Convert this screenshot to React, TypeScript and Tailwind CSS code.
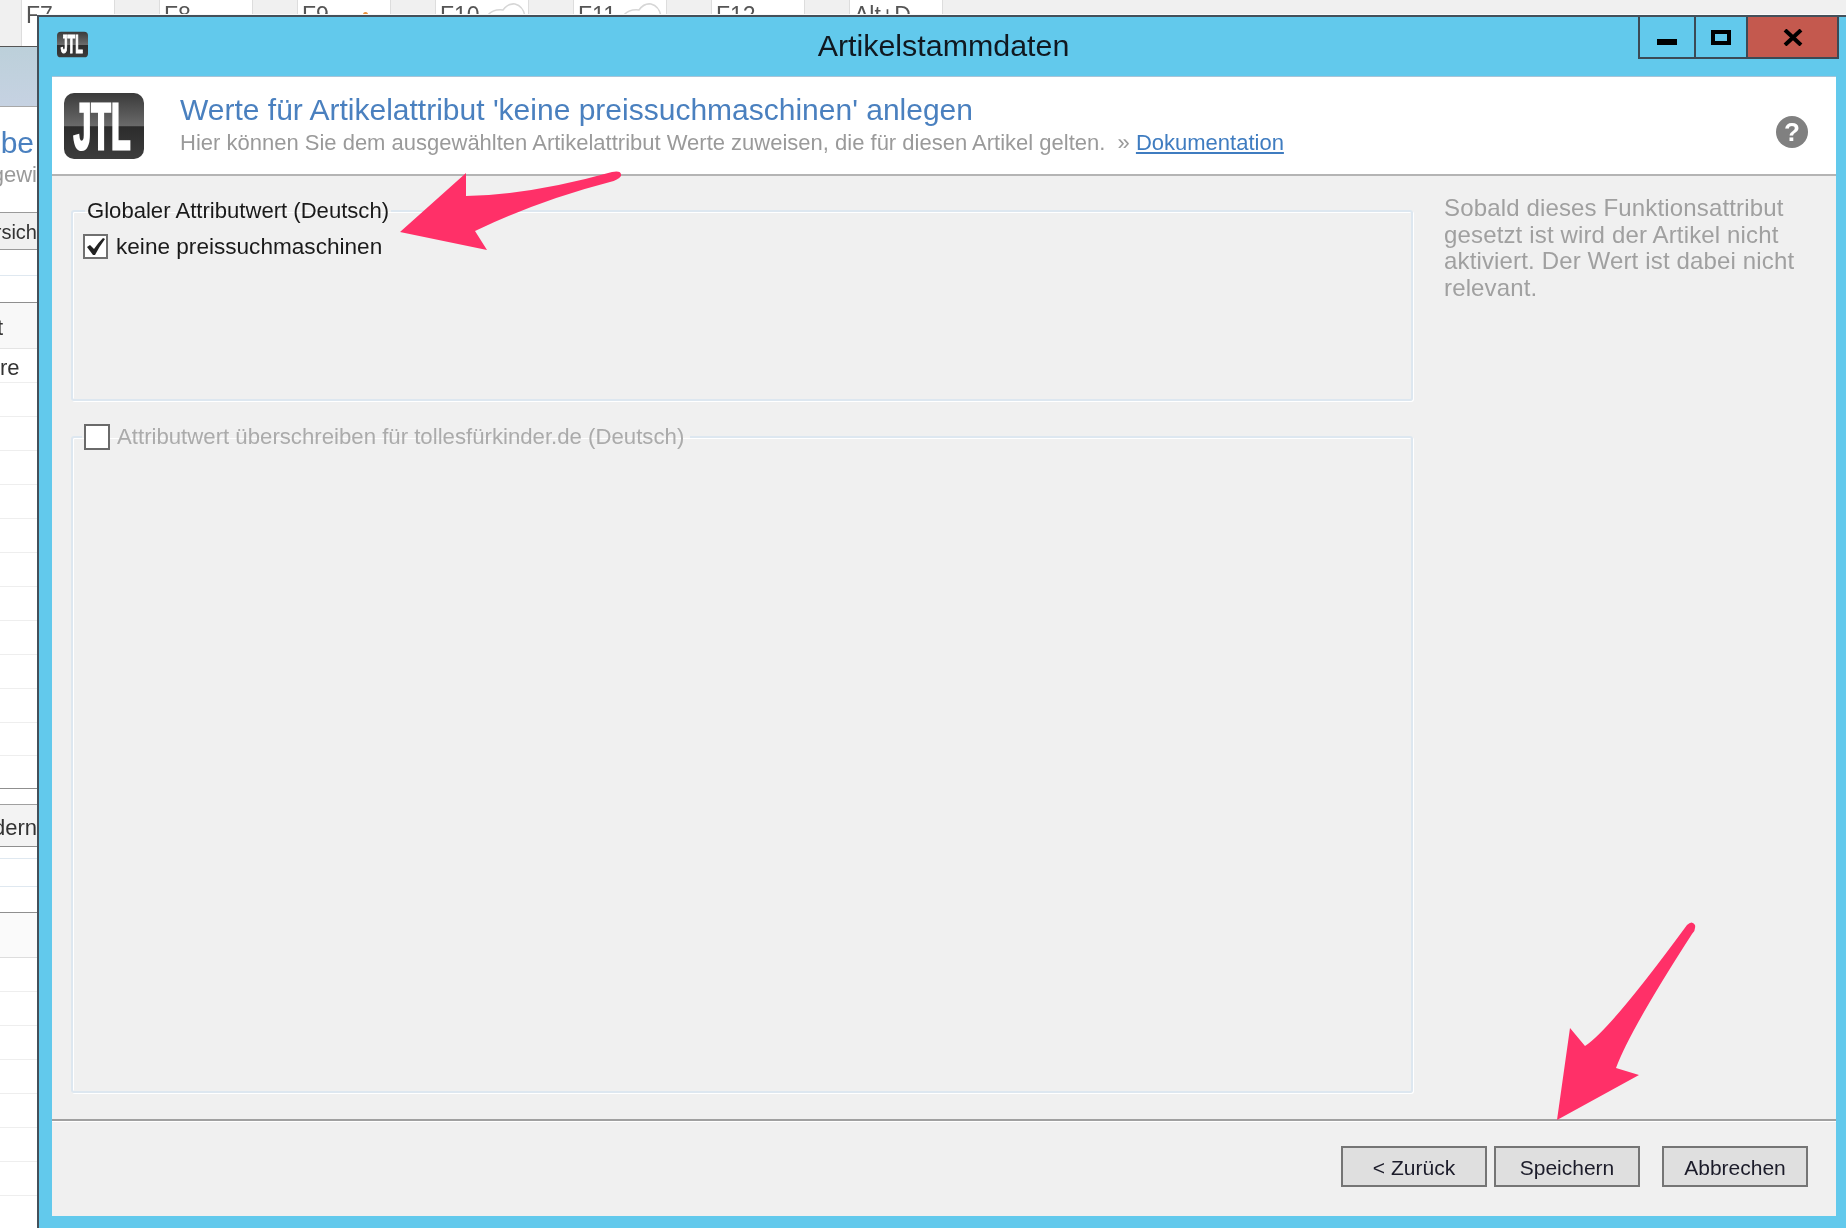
const keys = ["F7", "F8", "F9", "F10", "F11", "F12", "Alt+D"];

// rows of the list behind the dialog, only a 37px strip of it is visible
const rows = [
  { h: "h-[26px]", line: "border-[#dfe8f0]", bg: "bg-white", text: "" },
  { h: "h-[27px]", line: "border-[#8f8f8f]", bg: "bg-white", text: "" },
  { h: "h-[46px]", line: "border-[#e4e4e4]", bg: "bg-[#f8f8f8]", text: "t" },
  { h: "h-[34px]", line: "border-[#eeeeee]", bg: "bg-white", text: "re" },
  { h: "h-[34px]", line: "border-[#eeeeee]", bg: "bg-white", text: "" },
  { h: "h-[34px]", line: "border-[#eeeeee]", bg: "bg-white", text: "" },
  { h: "h-[34px]", line: "border-[#eeeeee]", bg: "bg-white", text: "" },
  { h: "h-[34px]", line: "border-[#eeeeee]", bg: "bg-white", text: "" },
  { h: "h-[34px]", line: "border-[#eeeeee]", bg: "bg-white", text: "" },
  { h: "h-[34px]", line: "border-[#eeeeee]", bg: "bg-white", text: "" },
  { h: "h-[34px]", line: "border-[#eeeeee]", bg: "bg-white", text: "" },
  { h: "h-[34px]", line: "border-[#eeeeee]", bg: "bg-white", text: "" },
  { h: "h-[34px]", line: "border-[#eeeeee]", bg: "bg-white", text: "" },
  { h: "h-[34px]", line: "border-[#eeeeee]", bg: "bg-white", text: "" },
  { h: "h-[33px]", line: "border-[#eeeeee]", bg: "bg-white", text: "" },
  { h: "h-[33px]", line: "border-[#8f8f8f]", bg: "bg-white", text: "" },
  { h: "h-[16px]", line: "border-[#a0a0a0]", bg: "bg-white", text: "" },
  { h: "h-[42px]", line: "border-[#8f8f8f]", bg: "bg-[#f3f3f3]", text: "dern" },
  { h: "h-[12px]", line: "border-[#dfe8f0]", bg: "bg-white", text: "" },
  { h: "h-[28px]", line: "border-[#dfe8f0]", bg: "bg-white", text: "" },
  { h: "h-[26px]", line: "border-[#8f8f8f]", bg: "bg-white", text: "" },
  { h: "h-[45px]", line: "border-[#dddddd]", bg: "bg-[#fafafa]", text: "" },
  { h: "h-[34px]", line: "border-[#eeeeee]", bg: "bg-white", text: "" },
  { h: "h-[34px]", line: "border-[#eeeeee]", bg: "bg-white", text: "" },
  { h: "h-[34px]", line: "border-[#eeeeee]", bg: "bg-white", text: "" },
  { h: "h-[34px]", line: "border-[#eeeeee]", bg: "bg-white", text: "" },
  { h: "h-[34px]", line: "border-[#eeeeee]", bg: "bg-white", text: "" },
  { h: "h-[34px]", line: "border-[#eeeeee]", bg: "bg-white", text: "" },
  { h: "h-[34px]", line: "border-[#eeeeee]", bg: "bg-white", text: "" },
  { h: "h-[34px]", line: "border-[#eeeeee]", bg: "bg-white", text: "" },
];

function JtlLogo({ className }: { className: string }) {
  return (
    <svg viewBox="0 0 80 66" className={className}>
      <defs>
        <linearGradient id="jtlBg" x1="0" y1="0" x2="0" y2="1">
          <stop offset="0" stopColor="#3a3a3a" />
          <stop offset="0.5" stopColor="#6a6a6a" />
          <stop offset="0.51" stopColor="#2c2c2c" />
          <stop offset="1" stopColor="#3c3c3c" />
        </linearGradient>
      </defs>
      <rect width="80" height="66" rx="10" fill="url(#jtlBg)" />
      <text
        x="38"
        y="56"
        textAnchor="middle"
        fontFamily="'Liberation Sans', sans-serif"
        fontWeight="700"
        fontSize="65"
        textLength="57"
        lengthAdjust="spacingAndGlyphs"
        fill="#ffffff"
        stroke="#ffffff"
        strokeWidth="3"
      >
        JTL
      </text>
    </svg>
  );
}

function WinButton({ label }: { label: string }) {
  return (
    <button className="w-[146px] h-[41px] pt-[2px] border-2 border-[#757575] bg-[#dfdfdf] text-[21px] text-[#1c1c2a]">
      {label}
    </button>
  );
}

export default function App() {
  return (
    <div className="relative h-screen overflow-hidden bg-[#f0f0f0] font-['Liberation_Sans',Arial,sans-serif] blur-[0.5px]">
      {/* Main window behind the dialog */}
      <div className="flex h-[47px] gap-[44px] pl-[21px] border-b border-[#555555]">
        {keys.map((k) => (
          <div
            key={k}
            className="w-[94px] flex justify-between gap-2 bg-white border-x border-[#dddddd] pl-[4px] pr-[4px] pt-[1px] text-[23px] leading-[28px] text-[#555555]"
          >
            <span>{k}</span>
            {k === "F9" && <span className="w-[5px] h-[5px] mt-[11px] mr-[18px] rounded-full bg-[#e8913a]" />}
            {(k === "F10" || k === "F11") && (
              <svg viewBox="0 0 38 16" className="w-[38px] h-[16px] mr-[8px] shrink-0">
                <path d="M0 14 Q5 8 15 9 Q20 2 27 3 Q35 5 37 15" stroke="#d6d6d6" strokeWidth="1.5" fill="none" />
              </svg>
            )}
          </div>
        ))}
      </div>
      <div className="w-[37px] overflow-hidden flex flex-col">
        <div className="h-[60px] shrink-0 border-b border-[#a8a8a8] bg-gradient-to-b from-[#bcd0da] to-[#c6d2e2]" />
        <div className="h-[105px] shrink-0 bg-white flex flex-col items-end pt-[19px] pr-[3px] whitespace-nowrap">
          <span className="text-[30px] leading-[34px] text-[#4a80bf]">be</span>
          <span className="text-[22px] leading-[28px] mt-[1px] -mr-[3px] text-[#9a9a9a]">gewi</span>
        </div>
        <div className="h-[38px] shrink-0 pt-[2px] border-y border-[#9a9a9a] bg-[#f0f0f0] flex justify-end items-center text-[20px] text-[#333333] whitespace-nowrap">
          rsich
        </div>
        {rows.map((r, i) => (
          <div
            key={i}
            className={`${r.h} ${r.bg} ${r.line} shrink-0 pt-[3px] border-b flex items-center text-[22px] text-[#333333] whitespace-nowrap ${r.text === "dern" ? "justify-end" : "justify-start"}`}
          >
            {r.text === "t" ? <span className="-ml-[3px]">{r.text}</span> : r.text}
          </div>
        ))}
      </div>

      {/* Dialog */}
      <div className="absolute left-[37px] top-[15px] right-0 bottom-0 flex flex-col bg-[#62c9ec] border-l-2 border-t-2 border-[#44505a] shadow-[0_-1px_0_#fafafa]">
        <div className="h-[59px] shrink-0 grid grid-cols-[1fr_auto_1fr]">
          <div className="pl-[18px] pt-[14px]">
            <JtlLogo className="w-[31px] h-[27px]" />
          </div>
          <div className="pt-[9px] pl-[2px] text-[30.4px] leading-[38px] text-[#101820]">Artikelstammdaten</div>
          <div className="flex justify-end items-start pr-[7px]">
            <div className="w-[56px] h-[42px] border-2 border-t-0 border-r-0 border-[#3b4a55] flex justify-center">
              <div className="w-[20px] h-[6px] mt-[22px] bg-black" />
            </div>
            <div className="w-[52px] h-[42px] border-2 border-t-0 border-r-0 border-[#3b4a55] flex justify-center">
              <div className="w-[20px] h-[15px] mt-[13px] border-[4px] border-black" />
            </div>
            <div className="w-[93px] h-[42px] border-2 border-t-0 border-[#3b4a55] bg-[#c4594e] flex justify-center">
              <svg viewBox="0 0 20 17" className="w-[20px] h-[17px] mt-[12px]">
                <path d="M2 1 L18 16 M18 1 L2 16" stroke="#000000" strokeWidth="4" fill="none" />
              </svg>
            </div>
          </div>
        </div>

        <div className="flex-1 min-h-0 flex flex-col ml-[13px] mr-[10px] mb-[12px] bg-[#f0f0f0]">
          <div className="h-[100px] shrink-0 relative flex items-start bg-white border-b-2 border-[#b4b4b4] border-t border-t-[#a8c4d8] pl-[12px] pt-[16px]">
            <JtlLogo className="w-[80px] h-[66px] shrink-0" />
            <div className="ml-[36px] -mt-[1px]">
              <h1 className="text-[30px] leading-[36px] text-[#4a80bf]">Werte für Artikelattribut 'keine preissuchmaschinen' anlegen</h1>
              <p className="mt-[2px] text-[22px] leading-[26px] text-[#9a9a9a]">
                Hier können Sie dem ausgewählten Artikelattribut Werte zuweisen, die für diesen Artikel gelten.&nbsp;&nbsp;»&nbsp;
                <a className="text-[#3f7cc0] underline">Dokumentation</a>
              </p>
            </div>
            <div className="absolute right-[28px] top-[39px] w-[32px] h-[32px] rounded-full bg-[#808080] flex items-center justify-center text-[26px] font-bold text-white">
              ?
            </div>
          </div>

          <div className="flex-1 min-h-0 flex">
            <div className="w-[1361px] shrink-0 flex flex-col pl-[19px] pt-[21px]">
              <fieldset className="h-[204px] shrink-0 rounded-[3px] border-2 border-[#dde7f0] shadow-[inset_1px_1px_0_#ffffff,1px_1px_0_#ffffff]">
                <legend className="ml-[12px] px-[2px] text-[22.1px] leading-[28px] text-[#1a1a1a]">Globaler Attributwert (Deutsch)</legend>
                <label className="flex items-center gap-[8px] ml-[10px] mt-[5px] text-[22.6px] text-[#1a1a1a]">
                  <span className="w-[25px] h-[25px] border-2 border-[#707070] bg-white flex items-center justify-center">
                    <svg viewBox="0 0 20 20" className="w-[20px] h-[20px]">
                      <path d="M1 10 L4 8 L8 12 Q12 6 17 1 L19 2 Q13 10 9 18 L7 18 Z" fill="#222222" />
                    </svg>
                  </span>
                  keine preissuchmaschinen
                </label>
              </fieldset>
              <fieldset className="h-[670px] mt-[22px] shrink-0 rounded-[3px] border-2 border-[#dde7f0] shadow-[inset_1px_1px_0_#ffffff,1px_1px_0_#ffffff]">
                <legend className="ml-[9px] pl-[2px] pr-[6px] flex items-center gap-[7px] text-[22.2px] leading-[28px] text-[#ababab]">
                  <span className="w-[26px] h-[26px] border-2 border-[#6a6a6a] bg-white" />
                  Attributwert überschreiben für tollesfürkinder.de (Deutsch)
                </legend>
              </fieldset>
            </div>
            <p className="pl-[31px] pt-[19px] w-[395px] text-[24px] leading-[26.6px] tracking-[0.15px] text-[#a0a0a0]">
              Sobald dieses Funktionsattribut gesetzt ist wird der Artikel nicht aktiviert. Der Wert ist dabei nicht relevant.
            </p>
          </div>

          <div className="h-[97px] shrink-0 flex justify-end items-start pt-[25px] pr-[28px] border-t-2 border-[#a0a0a0] shadow-[inset_0_1px_0_#ffffff]">
            <WinButton label="< Zurück" />
            <div className="ml-[7px]"><WinButton label="Speichern" /></div>
            <div className="ml-[22px]"><WinButton label="Abbrechen" /></div>
          </div>
        </div>
      </div>

      {/* Annotation arrows */}
      <svg className="absolute inset-0 w-full h-full pointer-events-none" viewBox="0 0 1846 1228">
        <path
          d="M400 232 L466 173 L466 196 Q530 195 612 172 Q622 170 621 176 Q618 180 610 182 Q540 200 475 231 L487 250 Z"
          fill="#ff3068"
        />
        <path
          d="M1557 1120 L1570 1028 L1585 1046 Q1610 1030 1687 925 Q1692 920 1695 925 Q1696 930 1692 934 Q1630 1030 1616 1068 L1639 1075 Z"
          fill="#ff3068"
        />
      </svg>
    </div>
  );
}
